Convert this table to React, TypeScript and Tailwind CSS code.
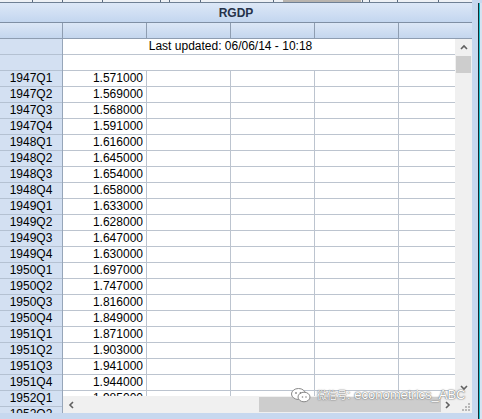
import React from 'react'

const rows: [string, string][] = [
  ['1947Q1', '1.571000'],
  ['1947Q2', '1.569000'],
  ['1947Q3', '1.568000'],
  ['1947Q4', '1.591000'],
  ['1948Q1', '1.616000'],
  ['1948Q2', '1.645000'],
  ['1948Q3', '1.654000'],
  ['1948Q4', '1.658000'],
  ['1949Q1', '1.633000'],
  ['1949Q2', '1.628000'],
  ['1949Q3', '1.647000'],
  ['1949Q4', '1.630000'],
  ['1950Q1', '1.697000'],
  ['1950Q2', '1.747000'],
  ['1950Q3', '1.816000'],
  ['1950Q4', '1.849000'],
  ['1951Q1', '1.871000'],
  ['1951Q2', '1.903000'],
  ['1951Q3', '1.941000'],
  ['1951Q4', '1.944000'],
  ['1952Q1', '1.985000'],
  ['1952Q2', '2.003000'],
]

function TopStrip() {
  const ticks = [32, 62, 102, 160, 169, 200, 273, 362, 369, 397, 438]
  return (
    <svg width="482" height="3" className="block">
      <rect x="0" y="0" width="472" height="2" fill="#eef1f5" />
      <rect x="283" y="0" width="78" height="2" fill="#b9b4ae" />
      {ticks.map(t => <rect key={t} x={t} y="0" width="1" height="2" fill="#5a6a7e" />)}
      <rect x="0" y="2" width="472" height="1" fill="#6f8094" />
    </svg>
  )
}

function Chevron({ dir }: { dir: 'up' | 'down' | 'left' | 'right' }) {
  const d = {
    up: 'M1 5 L4 2 L7 5',
    down: 'M1 2 L4 5 L7 2',
    left: 'M5 1 L2 4 L5 7',
    right: 'M2 1 L5 4 L2 7',
  }[dir]
  return (
    <svg width="8" height="8" viewBox="0 0 8 8" className="block">
      <path d={d} fill="none" stroke="#606060" strokeWidth="1.6" />
    </svg>
  )
}

function Watermark() {
  return (
    <div className="absolute left-[291px] top-[388px] flex items-center gap-[6px] text-white [text-shadow:0_0_1px_#555,0_0_2px_#777]">
      <svg width="20" height="15" viewBox="0 0 20 15">
        <ellipse cx="7.5" cy="6" rx="7" ry="5.5" fill="#fff" stroke="#888" strokeWidth="1" />
        <ellipse cx="13" cy="9" rx="6" ry="4.8" fill="#fff" stroke="#888" strokeWidth="1" />
        <circle cx="5" cy="5" r="0.9" fill="#888" />
        <circle cx="9.5" cy="5" r="0.9" fill="#888" />
        <circle cx="11.5" cy="9" r="0.8" fill="#888" />
        <circle cx="15" cy="9" r="0.8" fill="#888" />
      </svg>
      <span className="text-[13px] leading-[14px] font-['Liberation_Sans','Noto_Sans_CJK_SC',sans-serif]">
        <span className="text-[10px]">微信号</span>: econometrics_ABC
      </span>
    </div>
  )
}

export default function App() {
  return (
    <div className="relative w-[482px] h-[419px] overflow-hidden bg-[#c7d8ef] font-['Liberation_Sans',Arial,sans-serif] text-[12px] text-black">
      <TopStrip />
      <div className="flex">
        <div className="w-[472px] flex flex-col">
          {/* title band */}
          <div className="h-[20px] border-b border-[#7f8fa4] bg-gradient-to-b from-[#dde8f7] to-[#c3d6ef] flex items-center justify-center font-bold text-[12px] text-[#26324a]">
            RGDP
          </div>
          {/* column header row */}
          <div className="h-[16px] flex border-b border-[#8e9db1] bg-gradient-to-b from-[#dce7f6] to-[#c4d6ee]">
            <div className="w-[63px] border-r border-[#8e9db1]" />
            <div className="w-[84px] border-r border-[#8e9db1]" />
            <div className="w-[84px] border-r border-[#8e9db1]" />
            <div className="w-[84px] border-r border-[#8e9db1]" />
            <div className="w-[84px] border-r border-[#8e9db1]" />
            <div className="flex-1" />
          </div>
          {/* body */}
          <div className="flex h-[374px]">
            {/* row headers */}
            <div className="w-[63px] border-r border-[#97a6b9] overflow-hidden flex flex-col">
              <div className="h-[16px] shrink-0 bg-[#d3e0f2] border-b border-[#b4c1d2]" />
              <div className="h-[16px] shrink-0 bg-[#d3e0f2] border-b border-[#b4c1d2]" />
              {rows.map(([q]) => (
                <div key={q} className="h-[16px] shrink-0 bg-[#d3e0f2] border-b border-[#b4c1d2] flex items-center justify-center leading-[15px]">
                  {q}
                </div>
              ))}
            </div>
            {/* data + scrollbars */}
            <div className="flex-1 flex flex-col">
              <div className="flex h-[357px]">
                <div className="w-[392px] bg-white overflow-hidden flex flex-col">
                  <div className="h-[16px] shrink-0 flex border-b border-[#bcc4cf]">
                    <div className="w-[336px] border-r border-[#bcc4cf] flex items-center justify-center leading-[15px]">
                      Last updated: 06/06/14 - 10:18
                    </div>
                  </div>
                  <div className="h-[16px] shrink-0 flex border-b border-[#bcc4cf]">
                    <div className="w-[336px] border-r border-[#bcc4cf]" />
                  </div>
                  {rows.map(([q, v]) => (
                    <div key={q} className="h-[16px] shrink-0 flex border-b border-[#bcc4cf]">
                      <div className="w-[84px] border-r border-[#bcc4cf] flex items-center justify-end pr-[3px] leading-[15px]">{v}</div>
                      <div className="w-[84px] border-r border-[#bcc4cf]" />
                      <div className="w-[84px] border-r border-[#bcc4cf]" />
                      <div className="w-[84px] border-r border-[#bcc4cf]" />
                    </div>
                  ))}
                </div>
                {/* vertical scrollbar */}
                <div className="w-[17px] bg-[#f0f0f0] flex flex-col items-center">
                  <div className="h-[17px] flex items-center justify-center"><Chevron dir="up" /></div>
                  <div className="h-[17px] w-[15px] bg-[#cdcdcd]" />
                  <div className="flex-1" />
                  <div className="h-[17px] flex items-center justify-center"><Chevron dir="down" /></div>
                </div>
              </div>
              {/* horizontal scrollbar */}
              <div className="flex h-[17px]">
                <div className="w-[392px] bg-[#f0f0f0] flex items-center">
                  <div className="w-[17px] flex justify-center"><Chevron dir="left" /></div>
                  <div className="w-[179px]" />
                  <div className="h-[15px] w-[182px] bg-[#cdcdcd]" />
                  <div className="flex-1 flex justify-center"><Chevron dir="right" /></div>
                </div>
                <div className="w-[17px] bg-[#f0f0f0] flex items-end justify-end p-[2px]">
                  <svg width="8" height="8" viewBox="0 0 8 8">
                    <rect x="6" y="0" width="2" height="2" fill="#b8b8b8" />
                    <rect x="3" y="3" width="2" height="2" fill="#b8b8b8" />
                    <rect x="6" y="3" width="2" height="2" fill="#b8b8b8" />
                    <rect x="0" y="6" width="2" height="2" fill="#b8b8b8" />
                    <rect x="3" y="6" width="2" height="2" fill="#b8b8b8" />
                    <rect x="6" y="6" width="2" height="2" fill="#b8b8b8" />
                  </svg>
                </div>
              </div>
            </div>
          </div>
        </div>
        {/* right window frame */}
        <div className="flex h-[416px]">
          <div className="w-[6px] bg-[#c7d8ef]" />
          <div className="w-[1px] bg-[#1d2a2e]" />
          <div className="w-[1px] bg-[#19c3d2]" />
          <div className="w-[2px] bg-[#d6e3f2]" />
        </div>
      </div>
      <Watermark />
    </div>
  )
}
